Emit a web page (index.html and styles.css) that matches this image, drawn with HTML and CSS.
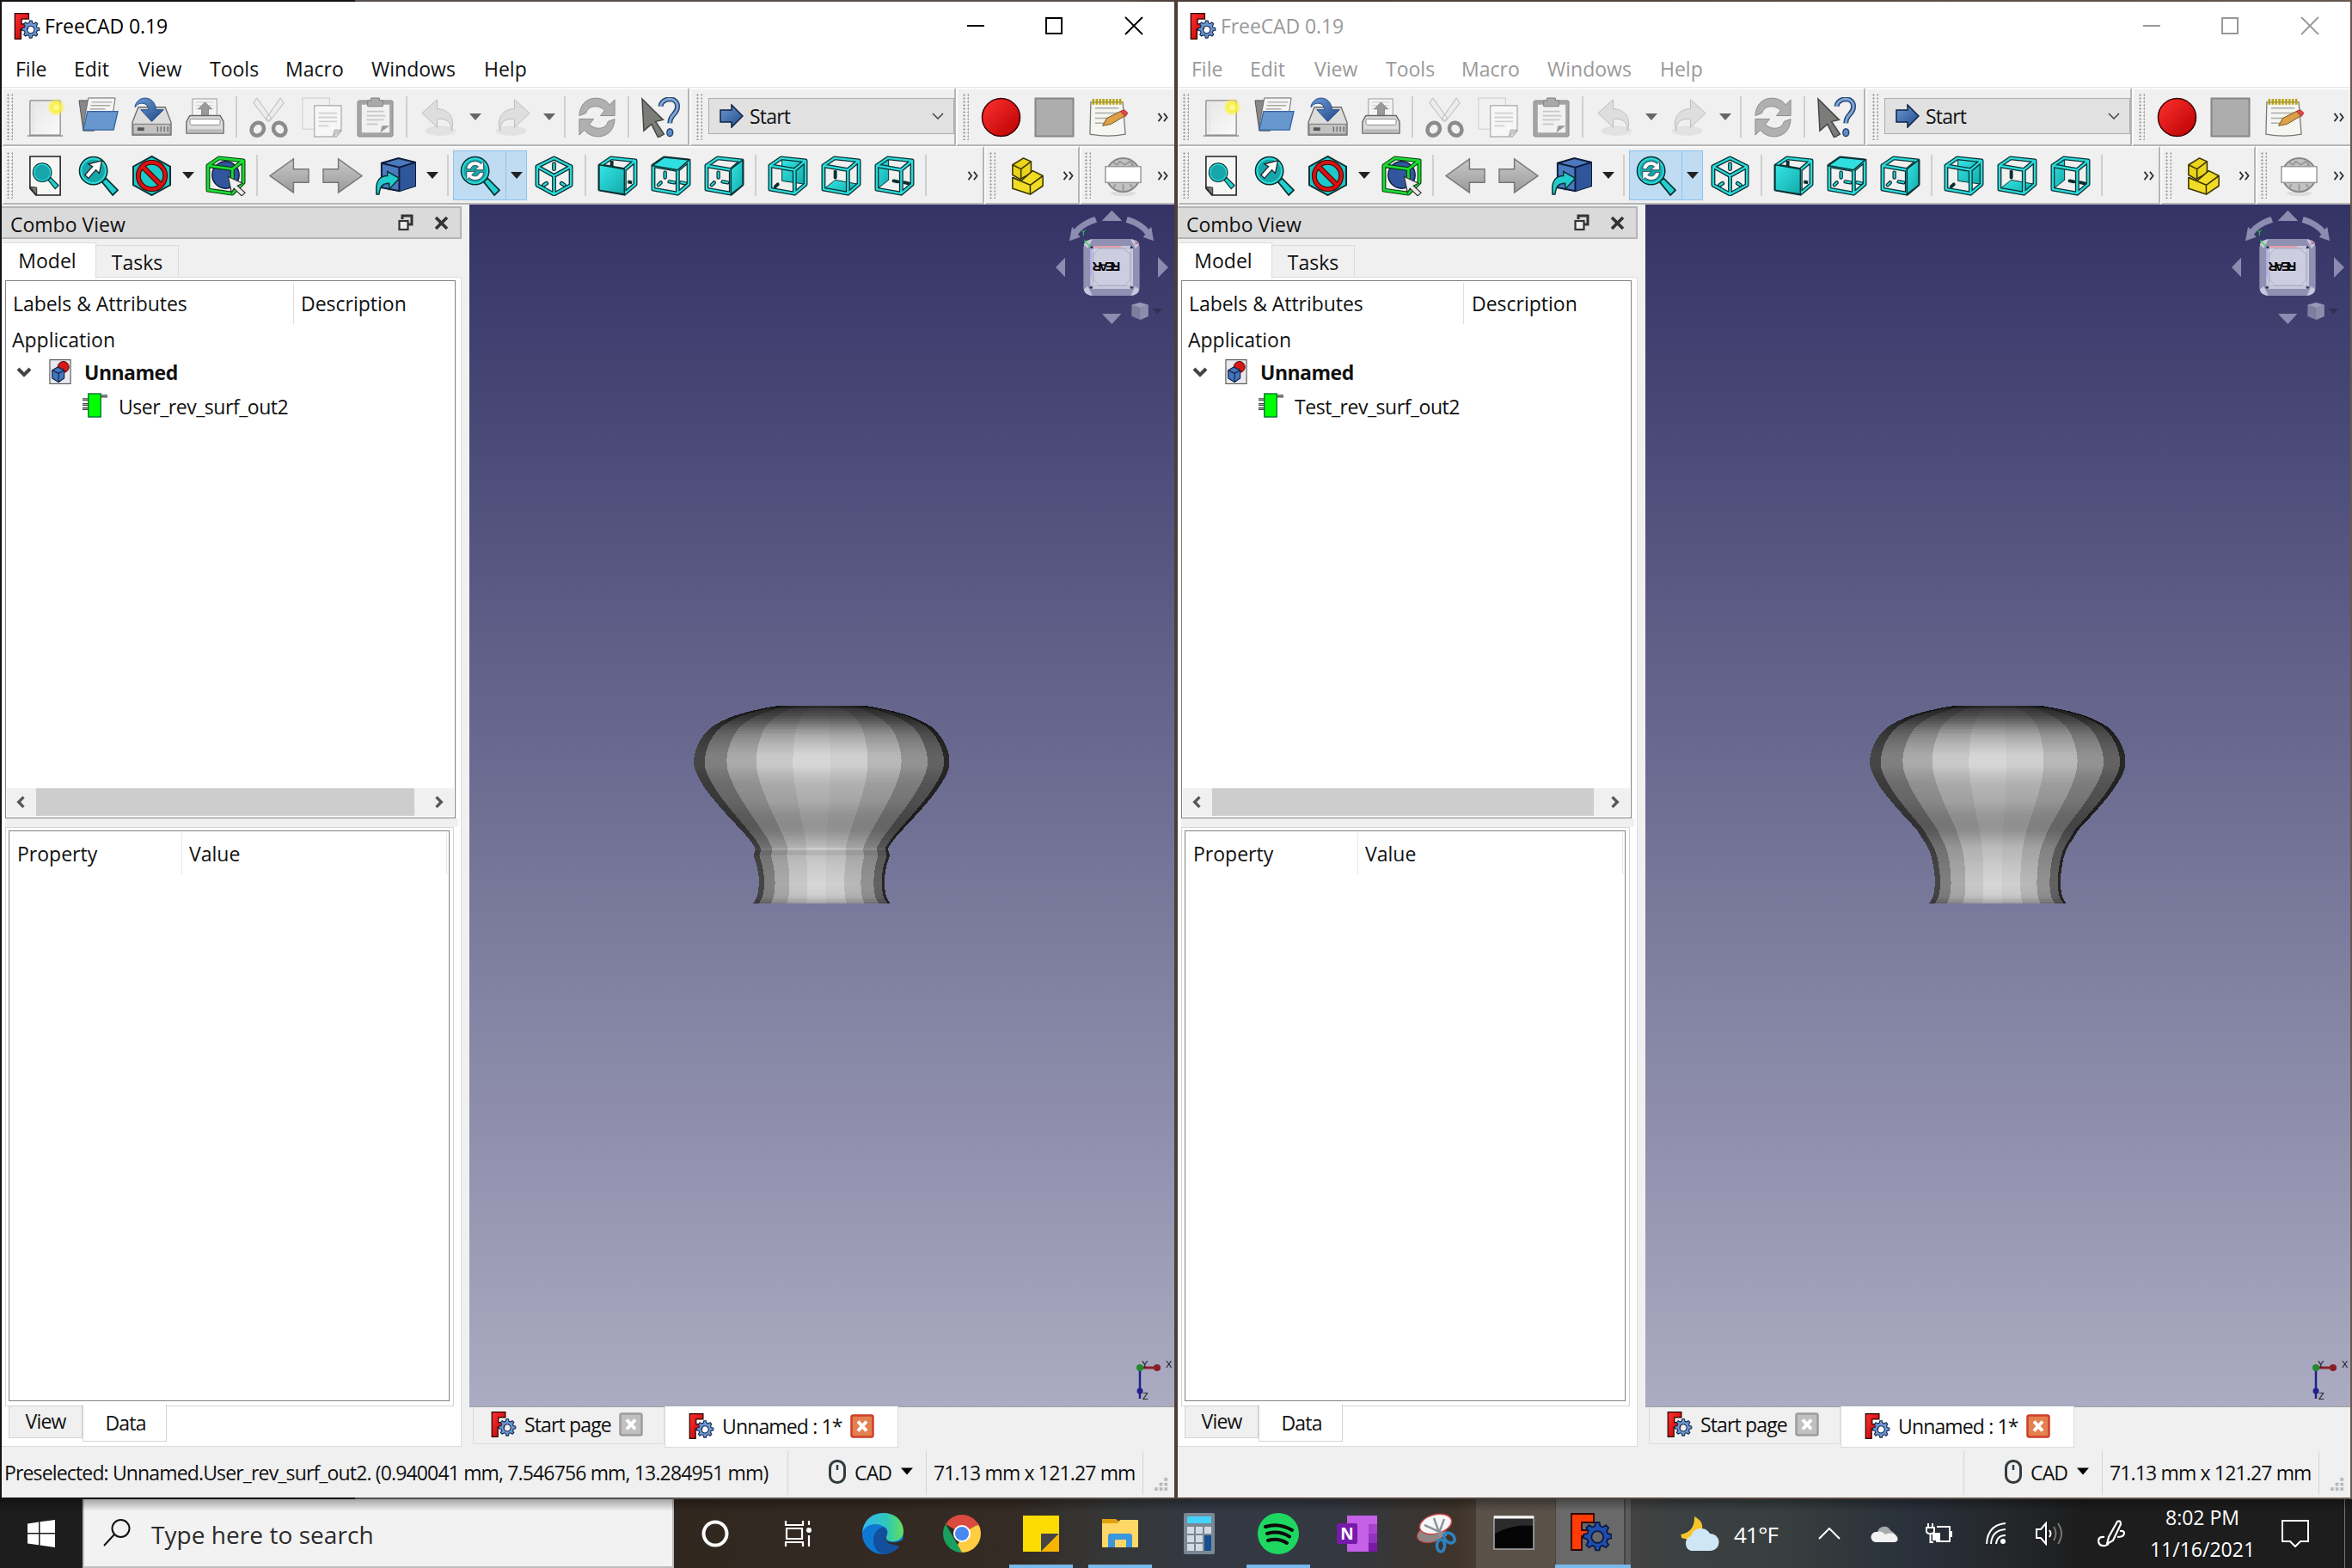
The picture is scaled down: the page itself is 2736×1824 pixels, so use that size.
FILE: index.html
```html
<!DOCTYPE html>
<html lang="en">
<head>
<meta charset="utf-8">
<title>FreeCAD 0.19</title>
<link rel="stylesheet" href="styles.css">
</head>
<body>
<svg class="defs" width="0" height="0">
<defs>
<linearGradient id="gTeal" x1="0" y1="0" x2="1" y2="1"><stop offset="0" stop-color="#35e6e6"/><stop offset="1" stop-color="#12a9a9"/></linearGradient>
<linearGradient id="gGrey" x1="0" y1="0" x2="0" y2="1"><stop offset="0" stop-color="#c9c9c9"/><stop offset="1" stop-color="#999"/></linearGradient>
<linearGradient id="gPaper" x1="0" y1="0" x2="1" y2="1"><stop offset="0" stop-color="#e6e6e6"/><stop offset="1" stop-color="#fafafa"/></linearGradient>
<linearGradient id="gBlue" x1="0" y1="0" x2="1" y2="1"><stop offset="0" stop-color="#6d9ad6"/><stop offset="1" stop-color="#204a87"/></linearGradient>
<linearGradient id="gRed" x1="0" y1="0" x2="1" y2="1"><stop offset="0" stop-color="#ff3030"/><stop offset="1" stop-color="#b80000"/></linearGradient>
<radialGradient id="gGlow"><stop offset="0" stop-color="#ffffc8"/><stop offset=".45" stop-color="#fcf03a"/><stop offset="1" stop-color="#fcf03a" stop-opacity="0"/></radialGradient>
<linearGradient id="gEdge" x1="0" y1="0" x2="1" y2="0"><stop offset="0" stop-color="#35b7f0"/><stop offset=".6" stop-color="#2fc8b8"/><stop offset="1" stop-color="#66e05a"/></linearGradient>
<path id="cog" fill-rule="evenodd" d="M21 0h6l1.500 6 4 1.700 5.300-3.200 4.200 4.200-3.200 5.300 1.700 4 6 1.500v6l-6 1.500-1.700 4 3.200 5.300-4.200 4.200-5.300-3.200-4 1.700-1.500 6h-6l-1.500-6-4-1.700-5.300 3.200-4.200-4.200 3.200-5.300-1.700-4-6-1.500v-6l6-1.500 1.700-4L6.100 8.700l4.200-4.200 5.300 3.200 4-1.700zM24 14a9.500 9.500 0 1 0 .01 0z"/>
<symbol id="fc" viewBox="0 0 48 48"><path d="M2 1H27V11H14V20H25V29H13V47H2z" fill="url(#gRed)" stroke="#2a0000" stroke-width="2"/><use href="#cog" transform="translate(14 14) scale(.69)" fill="#6c97d2" stroke="#14294d" stroke-width="2.500"/></symbol>
<symbol id="fcbig" viewBox="0 0 48 48"><path d="M1 1H27V11H13V20H23V27H13V43H1z" fill="#ff3c08" stroke="#320800" stroke-width="1.800"/><use href="#cog" transform="translate(14 11) scale(.72)" fill="#1f4fae" stroke="#0a1a44" stroke-width="2.500"/></symbol>
<symbol id="new" viewBox="0 0 48 48"><path d="M3 46H45" stroke="#777" stroke-width="2" opacity=".6"/><rect x="6" y="4" width="36" height="41" rx="1" fill="url(#gPaper)" stroke="#888" stroke-width="1.300"/><path d="M10 8v33" stroke="#ddd"/><circle cx="37" cy="12" r="11" fill="url(#gGlow)"/></symbol>
<symbol id="open" viewBox="0 0 48 48"><path d="M1 4h14l4 36H6z" fill="#888" stroke="#555"/><path d="M12 1h32l-5 33H6z" fill="#f4f4f4" stroke="#666"/><path d="M16 6h24M15 10h23M14 14h18" stroke="#aaa" stroke-width="1.500"/><path d="M11 17h36l-5 22H6z" fill="#6797cd" stroke="#3465a4" stroke-width="1.400"/></symbol>
<symbol id="save" viewBox="0 0 48 48"><path d="M8 12h32l7 18v15H1V30z" fill="#dcdcda" stroke="#666" stroke-width="1.300"/><path d="M2 32h44v12H2z" fill="#c2c2c0" stroke="#777"/><path d="M7 38h8" stroke="#555" stroke-width="4"/><path d="M31 35v6M35 35v6M39 35v6M43 35v6" stroke="#666" stroke-width="1.300"/><path d="M4 12C6-3 28-3 29 15h9L24 29 11 15h9C20 7 10 4 4 12z" fill="url(#gBlue)" stroke="#204a87"/></symbol>
<symbol id="print" viewBox="0 0 48 48"><path d="M9 2h29v24H9z" fill="#f4f4f4" stroke="#999"/><path d="M13 6h21M13 10h21M13 14h21" stroke="#ccc"/><path d="M24 6l8 8h-4v8h-8v-8h-4z" fill="#999" stroke="#888"/><path d="M6 22h36l4 7v14H2V29z" fill="#dcdcdc" stroke="#666" stroke-width="1.400"/><rect x="6" y="26" width="36" height="7" rx="2" fill="#fff" stroke="#888"/><path d="M4 40h40" stroke="#bbb" stroke-width="4"/></symbol>
<symbol id="cut" viewBox="0 0 48 48"><path d="M10 1L6 7l17 22 4-4zM38 1l4 6-17 22-4-4z" fill="#ececec" stroke="#b4b4b4"/><ellipse cx="11" cy="38" rx="7" ry="8" transform="rotate(40 11 38)" fill="none" stroke="#8c8c8c" stroke-width="4.600"/><ellipse cx="37" cy="38" rx="7" ry="8" transform="rotate(-40 37 38)" fill="none" stroke="#8c8c8c" stroke-width="4.600"/></symbol>
<symbol id="copy" viewBox="0 0 48 48"><path d="M1 1h32v37H1z" fill="#f1f1f1" stroke="#ccc"/><path d="M15 10h32v30l-6 7H15z" fill="#f7f7f7" stroke="#b5b5b5" stroke-width="1.500"/><path d="M20 19h22M20 24h22M20 29h22M20 34h12" stroke="#d0d0d0" stroke-width="1.800"/><path d="M47 39h-8l-2 8z" fill="#ccc" stroke="#aaa"/></symbol>
<symbol id="paste" viewBox="0 0 48 48"><rect x="3" y="4" width="42" height="43" rx="2" fill="#a4a4a4" stroke="#8a8a8a"/><path d="M8 9h33v33H8z" fill="#f1f1f1"/><path d="M14 17h20M14 22h22M14 27h20M14 32h13" stroke="#c8c8c8" stroke-width="1.800"/><path d="M15 4h4V1h10v3h4v7H15z" fill="#aaa" stroke="#808080"/><path d="M41 34h-9l-2 8z" fill="#999"/></symbol>
<symbol id="undo" viewBox="0 0 48 48"><ellipse cx="26" cy="40" rx="18" ry="6" fill="#e2e2e2"/><path d="M22 3v11c13 0 22 10 17 26 0-11-6-15-17-14v10L4 19z" fill="#dedede" stroke="#bbb"/></symbol>
<symbol id="redo" viewBox="0 0 48 48"><use href="#undo" transform="translate(48 0) scale(-1 1)"/></symbol>
<symbol id="refresh" viewBox="0 0 48 48"><path id="rfa" d="M3 22C4-3 31-3 39 9l6-6v19H28l5-6C26 8 13 10 11 19z" fill="#b0b0b0" stroke="#8a8a8a"/><use href="#rfa" transform="rotate(180 24 24)"/></symbol>
<symbol id="what" viewBox="0 0 48 48"><path d="M2 2l25 25-9 2 10 15-7 4-8-16-9 8z" fill="#7a7c78" stroke="#444" stroke-width="1.500"/><path d="M24 11C25 0 44-1 44 11c0 10-9 9-9 20" fill="none" stroke="#27466f" stroke-width="6"/><path d="M24 11C25 0 44-1 44 11c0 10-9 9-9 20" fill="none" stroke="#7fa6d8" stroke-width="3"/><ellipse cx="35" cy="42" rx="3.500" ry="4.500" fill="#5f8cc8" stroke="#27466f" stroke-width="1.500"/></symbol>
<symbol id="arrowB" viewBox="0 0 28 28"><path d="M1 7h13V1l13 13-13 13v-6H1z" fill="url(#gBlue)" stroke="#0f2142" stroke-width="1.500"/></symbol>
<symbol id="rec" viewBox="0 0 48 48"><circle cx="24" cy="24" r="22.500" fill="url(#gRed)" stroke="#3c0000" stroke-width="1.500"/></symbol>
<symbol id="stop" viewBox="0 0 48 48"><rect x="1.500" y="1.500" width="45" height="45" fill="#adadad" stroke="#858585" stroke-width="2"/></symbol>
<symbol id="macro" viewBox="0 0 48 48"><path d="M4 6h38l3 38q-21 4-42 0z" fill="#f5f5f2" stroke="#777" stroke-width="1.300"/><path d="M9 13h28M9 19h28M9 25h22M9 31h16" stroke="#aaa" stroke-width="1.500"/><path d="M7 2v7M11 2v7M15 2v7M19 2v7M23 2v7M27 2v7M31 2v7M35 2v7M39 2v7" stroke="#b7a100" stroke-width="2.400"/><path d="M18 34l5-9 18-9 4 6-17 10z" fill="#dca048" stroke="#7a5210"/><path d="M39 17l5-2 4 4-3 4z" fill="#e04848" stroke="#a33"/></symbol>
<g id="mag"><path d="M28 31l5-4 14 14-6 6z" fill="#22d0d0" stroke="#0b2f30" stroke-width="1.800"/><circle cx="18" cy="18" r="16.500" fill="#2bdada" stroke="#0b2f30" stroke-width="1.600"/><circle cx="18" cy="18" r="13.500" fill="#16a5a8"/></g>
<symbol id="fitall" viewBox="0 0 48 48"><path d="M6 1h36v46H13l-7-8z" fill="#f6f7f4" stroke="#222" stroke-width="1.600"/><path d="M6 37l8 1v9z" fill="#777" stroke="#222"/><use href="#mag" transform="translate(8.500 8) scale(.67)"/></symbol>
<symbol id="fitsel" viewBox="0 0 48 48"><use href="#mag"/><path d="M28 6l-3 15-4-4-9 10-4-4 9-10-5-3z" fill="#fff" stroke="#222" stroke-width="1.300"/></symbol>
<symbol id="dstyle" viewBox="0 0 48 48"><path d="M24 1l22 12v22L24 47 2 35V13z" fill="#1cc9c9" stroke="#0b2f30" stroke-width="2"/><circle cx="24" cy="24" r="16" fill="none" stroke="#460000" stroke-width="6"/><path d="M13 13l22 22" stroke="#460000" stroke-width="6.500"/><circle cx="24" cy="24" r="16" fill="none" stroke="#d81212" stroke-width="3.800"/><path d="M13 13l22 22" stroke="#d81212" stroke-width="4.300"/></symbol>
<symbol id="bbox" viewBox="0 0 48 48"><ellipse cx="24" cy="23" rx="16" ry="16" fill="#31569e" stroke="#0e1f43" stroke-width="1.500"/><g fill="none" stroke-linejoin="round"><path d="M3 12L32 16V45L3 41zM3 12L16 3 45 6 32 16M45 6V32L32 45" stroke="#053a0a" stroke-width="5"/><path d="M3 12L32 16V45L3 41zM3 12L16 3 45 6 32 16M45 6V32L32 45" stroke="#1bdc35" stroke-width="2.800"/></g><path d="M27 25l17 8-6 3 9 8-4 4-9-9-3 5z" fill="#eee" stroke="#333" stroke-width="1.200"/></symbol>
<symbol id="back" viewBox="0 0 48 48"><path d="M1 24L29 4v12h18v16H29v12z" fill="url(#gGrey)" stroke="#777" stroke-width="1.500"/></symbol>
<symbol id="fwd" viewBox="0 0 48 48"><path d="M47 24L19 4v12H1v16h18v12z" fill="url(#gGrey)" stroke="#777" stroke-width="1.500"/></symbol>
<symbol id="link" viewBox="0 0 48 48"><path d="M7 9l20-6 20 5v28L28 42 7 38z" fill="#4b79bd" stroke="#0d1c3a" stroke-width="2"/><path d="M28 14l19-6v28l-19 6z" fill="#2f569b"/><path d="M7 9l21 5 19-6M28 14v28" fill="none" stroke="#0d1c3a" stroke-width="2"/><path d="M1 46c-2-16 4-22 13-22v-5l14 8-12 13v-7C7 33 5 38 4 46z" fill="#22cccc" stroke="#0b2f30" stroke-width="1.500"/></symbol>
<symbol id="zoomv" viewBox="0 0 48 48"><use href="#mag"/><path id="za" d="M8 16c0-9 12-12 17-6l3-3v10H18l4-4c-4-3-9-1-9 3z" fill="#fff" stroke="#334" stroke-width=".8"/><use href="#za" transform="rotate(180 18 18)"/></symbol>
<symbol id="iso" viewBox="0 0 48 48"><g fill="none" stroke-linejoin="round" stroke-linecap="round"><path d="M24 3l20 10v22L24 46 4 35V13zM4 13l20 11 20-11M24 24v22M24 10v6M12 35l3-2M33 33l3 2" stroke="#0b2f30" stroke-width="5"/><path d="M24 3l20 10v22L24 46 4 35V13zM4 13l20 11 20-11M24 24v22M24 10v6M12 35l3-2M33 33l3 2" stroke="#2bdada" stroke-width="2.400"/></g></symbol>
<g id="cubeV" fill="none" stroke-linejoin="round" stroke-linecap="round"><path d="M3 12L32 17V45L3 40zM3 12L16 3 45 6 32 17M45 6V34L32 45" stroke="#0b2f30" stroke-width="5"/><path d="M3 12L32 17V45L3 40zM3 12L16 3 45 6 32 17M45 6V34L32 45" stroke="#2bdada" stroke-width="2.400"/></g>
<g id="cubeH" fill="none" stroke-linecap="round"><path d="M17 20v6M9 35l3-3M22 31l6 1M36 32l5 1" stroke="#0b2f30" stroke-width="4.500"/><path d="M17 20v6M9 35l3-3M22 31l6 1M36 32l5 1" stroke="#2bdada" stroke-width="2"/></g>
<symbol id="vfront" viewBox="0 0 48 48"><path d="M17 6v7M36 31l5 1" stroke="#0b2f30" stroke-width="4"/><use href="#cubeV"/><path d="M2 11L32 16V46L2 41z" fill="url(#gTeal)" stroke="#0b2f30" stroke-width="1.500"/></symbol>
<symbol id="vtop" viewBox="0 0 48 48"><use href="#cubeH"/><use href="#cubeV"/><path d="M2 12L16 2 46 5 32 17z" fill="#30dfdf" stroke="#0b2f30" stroke-width="1.500"/></symbol>
<symbol id="vright" viewBox="0 0 48 48"><use href="#cubeH"/><use href="#cubeV"/><path d="M32 16L46 5V35L32 46z" fill="url(#gTeal)" stroke="#0b2f30" stroke-width="1.500"/></symbol>
<symbol id="vrear" viewBox="0 0 48 48"><path d="M17 4L45 7V34L17 30z" fill="url(#gTeal)" stroke="#0b2f30"/><path d="M9 37l3-3" stroke="#0b2f30" stroke-width="4" stroke-linecap="round"/><use href="#cubeV"/></symbol>
<symbol id="vbottom" viewBox="0 0 48 48"><path d="M3 40L17 29 45 34 32 45z" fill="url(#gTeal)" stroke="#0b2f30"/><path d="M17 19v7" stroke="#0b2f30" stroke-width="4" stroke-linecap="round"/><use href="#cubeV"/></symbol>
<symbol id="vleft" viewBox="0 0 48 48"><path d="M3 12L17 4V29L3 40z" fill="url(#gTeal)" stroke="#0b2f30"/><path d="M23 30l5 1M36 32l5 1" stroke="#0b2f30" stroke-width="4" stroke-linecap="round"/><use href="#cubeV"/></symbol>
<symbol id="part" viewBox="0 0 48 48"><g stroke="#3d3500" stroke-width="1.600" stroke-linejoin="round"><path d="M6 11L19 3l9 4v14l-13 7-9-5z" fill="#ead51d"/><path d="M6 11l10 5 12-9M16 16v12" fill="none"/><path d="M6 26l10 4 14-12 12 6v12L27 46 6 39z" fill="#f0dc25"/><path d="M6 26l21 9 15-11M27 35v11" fill="none"/></g></symbol>
<symbol id="globe" viewBox="0 0 48 48"><ellipse cx="24" cy="45" rx="15" ry="3" fill="#ddd"/><circle cx="24" cy="23" r="20" fill="#c2c2c2" stroke="#848484" stroke-width="2"/><path d="M12 8l5 3 3-4 6 4 6-4 4 4-5 3M15 34l-3 5M24 34v9M32 34l4 5" stroke="#999" fill="none" stroke-width="2"/><rect x="3" y="13" width="42" height="19" fill="#fff" stroke="#999" stroke-width="1.500"/></symbol>
<symbol id="doc" viewBox="0 0 28 32"><rect x="1" y="1" width="26" height="30" fill="#e9e9ee" stroke="#555" stroke-width="1.200"/><circle cx="18" cy="10" r="7" fill="#d41818" stroke="#400"/><path d="M4 14l7-4 8 4v10l-7 5-8-5z" fill="#4475bd" stroke="#0e1f43" stroke-width="1.200"/><path d="M4 14l8 4 7-4M12 18v11" fill="none" stroke="#0e1f43" stroke-width="1.200"/></symbol>
<symbol id="feat" viewBox="0 0 32 30"><path d="M1 8h8M1 14h8M1 19h8M22 4h9" stroke="#444" stroke-width="3.200"/><path d="M1 8h8M1 14h8M1 19h8M22 4h9" stroke="#ab9" stroke-width="1"/><rect x="8" y="1" width="15" height="28" fill="#0f0" stroke="#063" stroke-width="1.300"/></symbol>
<symbol id="mouse" viewBox="0 0 20 28"><rect x="1.500" y="1.500" width="17" height="25" rx="8" fill="none" stroke="#333b3f" stroke-width="3"/><path d="M10 6v6" stroke="#333b3f" stroke-width="2.500"/></symbol>
<symbol id="closeG" viewBox="0 0 28 28"><rect x="1.500" y="1.500" width="25" height="25" rx="2" fill="#c0c0c0" stroke="#9c9c9c" stroke-width="2.500"/><path d="M9 8.500l10 11M19 8.500l-10 11" stroke="#fff" stroke-width="4"/></symbol>
<symbol id="closeR" viewBox="0 0 28 28"><rect x="1.500" y="1.500" width="25" height="25" rx="2" fill="#e2814f" stroke="#cf3f2b" stroke-width="2.500"/><path d="M9 8.500l10 11M19 8.500l-10 11" stroke="#fff" stroke-width="4"/></symbol>
<symbol id="more" viewBox="0 0 14 12"><path d="M1 1l4 5-4 5M8 1l4 5-4 5" fill="none" stroke="#333" stroke-width="2"/></symbol>
<symbol id="tri" viewBox="0 0 14 8"><path d="M0 0h14L7 8z"/></symbol>
</defs>
</svg>

<main class="desktop" id="desktop"></main>

<template id="windowTpl">
<section class="window">
  <header class="titlebar"><svg class="appicon"><use href="#fc"/></svg><span class="title">FreeCAD 0.19</span>
    <svg class="winbtns" viewBox="0 0 210 30" fill="none" stroke="currentColor" stroke-width="2"><path d="M5 15H25"/><rect x="97" y="6" width="18" height="18"/><path d="M189 5l20 20M209 5l-20 20" stroke-width="1.800"/></svg></header>
  <nav class="menu"><span>File</span><span>Edit</span><span>View</span><span>Tools</span><span>Macro</span><span>Windows</span><span>Help</span></nav>
  <div class="bars">
    <div class="bar file"><i class="grip"></i>
      <b class="cell"><svg><use href="#new"/></svg></b><b class="cell"><svg><use href="#open"/></svg></b><b class="cell"><svg><use href="#save"/></svg></b><b class="cell"><svg><use href="#print"/></svg></b><i class="sep"></i>
      <b class="cell"><svg><use href="#cut"/></svg></b><b class="cell"><svg><use href="#copy"/></svg></b><b class="cell"><svg><use href="#paste"/></svg></b><i class="sep"></i>
      <b class="cell"><svg><use href="#undo"/></svg></b><b class="drop faded"><svg><use href="#tri"/></svg></b><b class="cell"><svg><use href="#redo"/></svg></b><b class="drop faded"><svg><use href="#tri"/></svg></b><i class="sep"></i>
      <b class="cell"><svg><use href="#refresh"/></svg></b><i class="sep"></i><b class="cell"><svg><use href="#what"/></svg></b></div>
    <div class="bar bench"><i class="grip"></i><div class="combo"><svg class="ca"><use href="#arrowB"/></svg><span>Start</span><svg class="cv" viewBox="0 0 14 8"><path d="M1 1l6 6 6-6" fill="none" stroke="#444" stroke-width="1.500"/></svg></div></div>
    <div class="bar mac"><i class="grip"></i><b class="cell"><svg><use href="#rec"/></svg></b><b class="cell"><svg><use href="#stop"/></svg></b><b class="cell"><svg><use href="#macro"/></svg></b><svg class="more"><use href="#more"/></svg></div>
  </div>
  <div class="bars">
    <div class="bar view"><i class="grip"></i>
      <b class="cell"><svg><use href="#fitall"/></svg></b><b class="cell"><svg><use href="#fitsel"/></svg></b><b class="cell"><svg><use href="#dstyle"/></svg></b><b class="drop"><svg><use href="#tri"/></svg></b><b class="cell"><svg><use href="#bbox"/></svg></b><i class="sep"></i>
      <b class="cell"><svg><use href="#back"/></svg></b><b class="cell"><svg><use href="#fwd"/></svg></b><b class="cell"><svg><use href="#link"/></svg></b><b class="drop"><svg><use href="#tri"/></svg></b><i class="sep"></i>
      <b class="cell hot"><svg><use href="#zoomv"/></svg></b><b class="drop hot"><svg><use href="#tri"/></svg></b><b class="cell"><svg><use href="#iso"/></svg></b><i class="sep"></i>
      <b class="cell"><svg><use href="#vfront"/></svg></b><b class="cell"><svg><use href="#vtop"/></svg></b><b class="cell"><svg><use href="#vright"/></svg></b><i class="sep"></i>
      <b class="cell"><svg><use href="#vrear"/></svg></b><b class="cell"><svg><use href="#vbottom"/></svg></b><b class="cell"><svg><use href="#vleft"/></svg></b><i class="sep"></i><svg class="more"><use href="#more"/></svg></div>
    <div class="bar struct"><i class="grip"></i><b class="cell"><svg><use href="#part"/></svg></b><svg class="more"><use href="#more"/></svg></div>
    <div class="bar web"><i class="grip"></i><b class="cell"><svg><use href="#globe"/></svg></b><svg class="more"><use href="#more"/></svg></div>
  </div>
  <div class="work">
    <aside class="dock">
      <div class="docktitle"><span>Combo View</span><svg viewBox="0 0 60 20"><path d="M6 6V2h11v10h-4" fill="none" stroke="#333" stroke-width="3"/><rect x="2.500" y="8" width="10" height="10" fill="#eee" stroke="#333" stroke-width="2.200"/><path d="M45 4l13 13M58 4L45 17" stroke="#333" stroke-width="3.600"/></svg></div>
      <div class="tabs"><span class="on">Model</span><span class="off">Tasks</span></div>
      <div class="pane">
        <div class="tree">
          <div class="thead"><span class="labels">Labels &amp; Attributes</span><span class="desc">Description</span></div>
          <div class="row app">Application</div>
          <div class="row docrow"><svg class="chev" viewBox="0 0 18 12"><path d="M2 2l7 7 7-7" fill="none" stroke="#444" stroke-width="4"/></svg><svg class="docico"><use href="#doc"/></svg><strong>Unnamed</strong></div>
          <div class="row item"><svg><use href="#feat"/></svg><span data-slot="item"></span></div>
          <div class="hscroll"><svg viewBox="0 0 10 12"><path d="M8 1L3 6l5 5" fill="none" stroke="#555" stroke-width="2.800"/></svg><i></i><svg viewBox="0 0 10 12"><path d="M2 1l5 5-5 5" fill="none" stroke="#555" stroke-width="2.800"/></svg></div>
        </div>
        <div class="gap"></div>
        <div class="prop"><div class="propbox"><span class="p1">Property</span><span class="p2">Value</span></div></div>
        <div class="btabs"><span class="off">View</span><span class="on">Data</span></div>
      </div>
    </aside>
    <div class="mdi">
      <div class="viewport">
        <svg class="knob" viewBox="0 0 350 270" shape-rendering="crispEdges"></svg>
        <svg class="nav" viewBox="0 24 498 456">
          <g fill="#8c8cb0"><path d="M280 44l36 37h-71zM84 243l33-34v68zM477 243l-36-36v72zM280 441l33-36h-67z"/><path d="M221 66l7 20q-48 15-66 42l8 9-38 14 9-49 8 8q28-31 72-44zM335 66l-6 20q49 15 68 42l-8 9 37 14-8-49-9 8q-28-31-74-44z"/></g>
          <path d="M205 144h148l24 26v148l-24 24H205l-24-24V170z" fill="#9090b2"/>
          <path d="M182 165q4-20 30-19l-16 30zM376 165q-4-20-30-19l16 30zM182 320q4 20 30 21l-16-32zM376 320q-4 20-30 21l16-32z" fill="#c6c6dc"/>
          <rect x="205" y="168" width="149" height="150" fill="#c9c9de"/>
          <path d="M235 177h88l22 20v92l-22 18h-88l-20-18v-92z" fill="#cdcde0" stroke="#8f8fa5" stroke-width="2"/>
          <path d="M215 177h22l-22 20zM345 177h-22l22 20zM215 307h22l-22-20zM345 307h-22l22-20z" fill="#d3d3e6" stroke="#9999ae" stroke-width="1.500"/>
          <path d="M210 171h102" stroke="#ee8e9c" stroke-width="5"/><path d="M207 176v100" stroke="#a9a9f2" stroke-width="5"/>
          <path d="M208 173l-24-24" stroke="#2fdc4a" stroke-width="4"/><path d="M175 112l6 9 7-9M181 121v11" stroke="#2fdc4a" stroke-width="3" fill="none"/><path d="M360 152l12 12M372 152l-12 12" stroke="#b44a68" stroke-width="3"/>
          <g fill="#333360"><circle cx="210" cy="173" r="5"/><circle cx="349" cy="173" r="5"/><circle cx="208" cy="313" r="5"/><circle cx="349" cy="313" r="5"/></g>
          <text class="face" x="-266" y="-225" transform="rotate(180)">REAR</text>
          <path d="M349 374l30-8 28 8v40l-28 12-30-12z" fill="#7d7d9e"/><path d="M349 374l30 9 28-9-28-8z" fill="#9a9ab8"/><path d="M379 383v43l28-12v-40z" fill="#8c8cac"/><path d="M421 387h36l-18 18z" fill="#303055"/>
        </svg>
        <svg class="axes" viewBox="0 0 50 50"><path d="M11 11h24" stroke="#8a2028" stroke-width="3"/><circle cx="31" cy="11" r="4" fill="#8a2028"/><path d="M11 11v36" stroke="#20208c" stroke-width="2.500"/><circle cx="11" cy="38" r="3.500" fill="#20208c"/><circle cx="11" cy="11" r="4" fill="#1f8a30"/><g class="axt"><text x="13" y="11">Y</text><text x="41" y="11">X</text><text x="14" y="48">Z</text></g></svg>
      </div>
      <div class="mtabs"><div class="mtab off"><svg class="appicon"><use href="#fc"/></svg><span>Start page</span><svg class="x"><use href="#closeG"/></svg></div><div class="mtab on"><svg class="appicon"><use href="#fc"/></svg><span>Unnamed : 1*</span><svg class="x"><use href="#closeR"/></svg></div></div>
    </div>
  </div>
  <footer class="status"><span class="msg" data-slot="status"></span><span class="cad"><svg class="mo"><use href="#mouse"/></svg><em>CAD</em><svg class="dd"><use href="#tri"/></svg></span><span class="dims">71.13 mm x 121.27 mm</span><svg class="size" viewBox="0 0 18 18" fill="#b8b8b8"><path d="M12 0h4v4h-4zM6 6h4v4H6zM12 6h4v4h-4zM0 12h4v4H0zM6 12h4v4H6zM12 12h4v4h-4z"/></svg></footer>
</section>
</template>

<div class="taskbar">
  <div class="start"><svg viewBox="0 0 32 32" fill="#fff"><path d="M0 4.500l13-2V15H0zM14.500 2.300L32 0v15H14.500zM0 16.500h13v12.700L0 27.500zM14.500 16.500H32V32l-17.500-2.500z"/></svg></div>
  <div class="search"><svg viewBox="0 0 32 32" fill="none" stroke="#111" stroke-width="2"><circle cx="20.500" cy="11" r="10"/><path d="M13 18L1 31"/></svg><span>Type here to search</span></div>
  <div class="tb cort"><svg viewBox="0 0 48 48"><circle cx="24" cy="24" r="13.500" fill="none" stroke="#fff" stroke-width="4"/></svg></div>
  <div class="tb tview"><svg viewBox="0 0 48 48" fill="none" stroke="#fff" stroke-width="2.200"><path d="M8 9v5h20V9M8 39v-5h20v5M9 18h18v12H9zM35 9v5M35 26v13"/><circle cx="35" cy="20" r="3" fill="#fff" stroke="none"/></svg></div>
  <div class="tb"><svg viewBox="0 0 48 48"><circle cx="24" cy="24" r="24" fill="#0f78d4"/><path d="M0 23C2 6 14 0 25 0c14 0 23 10 23 21 0 8-6 12-12 12-7 0-9-3-8-5 4-8-4-15-12-15C8 13 2 17 0 23z" fill="url(#gEdge)"/><path d="M13 32c0-9 6-15 12-16 6 3 5 9 2 13 0 5 8 10 17 6-4 9-12 13-20 13-7-2-11-9-11-16z" fill="#124f9c"/><path d="M28 27c-3 5 6 11 20 4l1 5-5 3-6-2c-6 0-10-3-12-8z" fill="#33281f"/></svg></div>
  <div class="tb"><svg viewBox="0 0 48 48"><path d="M24 24L5 13a22 22 0 0 1 38 0z" fill="#db4a3f"/><path d="M24 24h0L43 13a22 22 0 0 1-19 33z" fill="#ffcd42"/><path d="M5 13l14 24 5 9A22 22 0 0 1 5 13z" fill="#18a05e"/><path d="M19 37l5-10 10-2-10 21z" fill="#ffcd42"/><path d="M5 13l19 1h19z" fill="#db4a3f"/><path d="M24 14h20" stroke="#db4a3f"/><circle cx="24" cy="24" r="10" fill="#fff"/><circle cx="24" cy="24" r="8" fill="#4a88f0"/></svg></div>
  <div class="tb run"><svg viewBox="0 0 48 48"><path d="M3 3h42v42H3z" fill="#fddc04"/><path d="M24 24h21L24 45z" fill="#444"/><path d="M45 24L24 45h21z" fill="#f7b500"/></svg></div>
  <div class="tb run"><svg viewBox="0 0 48 48"><path d="M3 7h16l4 3v8H3z" fill="#e0a010"/><path d="M3 12h18l3-4h21v32H3z" fill="#ffd766"/><path d="M10 40V27q0-3 3-3h22q3 0 3 3v13h-7v-9H18v9z" fill="#3a96dd"/></svg></div>
  <div class="tb"><svg viewBox="0 0 48 48"><rect x="6" width="36" height="48" rx="2" fill="#7a8894"/><rect x="10" y="4" width="28" height="8" fill="#43d3fa"/><path d="M10 16h8v8h-8zM20 16h8v8h-8zM30 16h8v8h-8zM10 26h8v8h-8zM20 26h8v8h-8zM10 36h8v8h-8zM20 36h8v8h-8z" fill="#d3dbe2"/><path d="M30 26h8v18h-8z" fill="#174f90"/></svg></div>
  <div class="tb run"><svg viewBox="0 0 48 48"><circle cx="24" cy="24" r="24" fill="#1ed760"/><path d="M9 16q16-5 31 4M11 24q14-4 26 3.500M12 32q12-3.500 22 3" fill="none" stroke="#0b0b0b" stroke-width="4" stroke-linecap="round"/></svg></div>
  <div class="tb"><svg viewBox="0 0 48 48"><path d="M12 3h35v42H12z" fill="#c561e6"/><path d="M37 13h10v11H37z" fill="#a742cd"/><path d="M37 24h10v11H37z" fill="#9332bf"/><path d="M37 35h10v10H37z" fill="#7a18a8"/><rect y="12" width="24" height="24" rx="2" fill="#7719aa"/><text class="one" x="12" y="31">N</text></svg></div>
  <div class="tb"><svg viewBox="0 0 48 48"><ellipse cx="18" cy="24" rx="17" ry="10" transform="rotate(-15 18 24)" fill="#8e8686" stroke="#b33"/><ellipse cx="23" cy="13" rx="19" ry="11" transform="rotate(-15 23 13)" fill="#f7f7f7" stroke="#c44" stroke-width="1.500"/><path d="M21 6l8 22M10 14l26 12M33 7L26 26" stroke="#8d9499" stroke-width="2.500"/><ellipse cx="39" cy="29" rx="5" ry="7" transform="rotate(-50 39 29)" fill="none" stroke="#2c83c0" stroke-width="3.500"/><ellipse cx="29" cy="38" rx="4.500" ry="7" fill="none" stroke="#2c83c0" stroke-width="3.500"/></svg></div>
  <div class="tb cmd"><svg viewBox="0 0 48 48"><rect x="1" y="4" width="46" height="38" fill="#050505" stroke="#aaa" stroke-width="1.500"/><path d="M2 24Q24 12 46 15V6H2z" fill="#2b2b2b"/><path d="M1 5h46" stroke="#fff" stroke-width="3"/></svg></div>
  <div class="tb fca run"><svg><use href="#fcbig"/></svg></div>
  <div class="tray">
    <svg class="weather" viewBox="0 0 46 40"><path d="M16 0q14 7 7 20-8 10-22 5 0-3-1-4Q17 18 16 0z" fill="#f7c52b"/><path d="M12 40a9 9 0 0 1 0-17 12 12 0 0 1 22-3 10 10 0 0 1 1 20z" fill="#cfe6f7"/></svg><span class="temp">41°F</span>
    <svg class="up" viewBox="0 0 26 14"><path d="M1 13L13 1l12 12" fill="none" stroke="#fff" stroke-width="2"/></svg>
    <svg class="cloud" viewBox="0 0 32 22"><path d="M8 10a8 8 0 0 1 15-3l5 4-12 6z" fill="#a7a9ab"/><path d="M6 21a6 6 0 0 1 1-12q6-2 10 3 10-4 14 3 2 5-3 6z" fill="#f2f2f2"/></svg>
    <svg class="bat" viewBox="0 0 32 24" fill="none" stroke="#fff" stroke-width="2"><path d="M3 0v5M8 0v5M1 5h9v4q0 3-4.500 3T1 9zM5.500 12v10H9M13 4h15v17H12M30 9v7"/><path d="M9 12h7v7H9z" fill="#fff"/></svg>
    <svg class="wifi" viewBox="0 0 24 26" fill="none" stroke="#fff" stroke-width="2"><path d="M1 25Q2 3 23 1M6 25Q7 9 23 8M12 25q1-10 11-10"/><circle cx="20" cy="22" r="3" fill="#fff" stroke="none"/></svg>
    <svg class="vol" viewBox="0 0 32 28" fill="none" stroke="#fff" stroke-width="2"><path d="M1 9h5l6-7v24l-6-7H1zM16 10q3 4 0 8"/><path d="M21 6q5 8 0 16M26 2q8 12 0 24" stroke="#777"/></svg>
    <svg class="pen" viewBox="0 0 32 32" fill="none" stroke="#fff" stroke-width="2.200"><path d="M8 20q-7-1-7 5 1 6 8 5l4-2M11 28l2-8L23 2q4-2 4 3L18 24zM26 13q5-1 5 3-1 4-8 4"/></svg>
    <div class="clock"><span>8:02 PM</span><span class="date">11/16/2021</span></div>
    <svg class="notif" viewBox="0 0 32 32" fill="none" stroke="#fff" stroke-width="2"><path d="M1 1h30v24h-9l-6 6-6-6H1z"/></svg>
    <i class="peek"></i>
  </div>
</div>
<script src="app.js"></script>
</body>
</html>
```
FILE: styles.css
```css
* { box-sizing: border-box; }
body { margin: 0; width: 2736px; height: 1824px; overflow: hidden; background: #2b2623; font: 23px/30px "Open Sans", "Noto Sans", sans-serif; color: #111; }
i, em { font-style: normal; }
b { font-weight: normal; }
svg { display: block; flex: none; }
.defs { position: absolute; }
.desktop { display: flex; gap: 4px; height: 1744px; padding: 2px; background: linear-gradient(90deg, #141414 0 413px, #57504c 413px 1300px, #4a3b36 1380px, #66584f 100%); }
.window { width: 1364px; height: 1740px; display: flex; flex-direction: column; background: #f0f0f0; overflow: hidden; }
.titlebar { height: 56px; background: #fff; display: flex; align-items: center; padding-left: 14px; color: #000; }
.appicon { width: 31px; height: 31px; }
.title { margin-left: 5px; flex: 1; letter-spacing: -.1px; }
.winbtns { width: 210px; height: 30px; margin-right: 36px; }
.menu { height: 44px; background: #fff; display: flex; border-bottom: 1px solid #e6e6e6; padding: 7px 0 0 16px; }
.menu span { width: 68px; }
.menu span:nth-child(2) { width: 75px; }
.menu span:nth-child(3) { width: 83px; }
.menu span:nth-child(4) { width: 88px; }
.menu span:nth-child(5) { width: 100px; }
.menu span:nth-child(6) { width: 131px; }
.inactive .title, .inactive .menu, .inactive .winbtns { color: #999; }
.bars { display: flex; height: 68px; }
.bar { display: flex; align-items: center; height: 68px; border-top: 2px solid #fbfbfb; border-bottom: 2px solid #b6b6b6; border-right: 2px solid #b6b6b6; border-left: 2px solid #fbfbfb; flex: none; }
.bar.file { width: 800px; }
.bar.bench { width: 310px; }
.bar.mac { width: 254px; border-right: 0; }
.bar.view { width: 1143px; }
.bar.struct { width: 111px; }
.bar.web { width: 110px; border-right: 0; }
.grip { flex: none; width: 7px; height: 54px; margin: 0 6px 0 4px; background-image: radial-gradient(circle at 1.500px 1.500px, #aaa 1.200px, transparent 1.300px); background-size: 5px 4px; }
.bench .grip, .mac .grip { margin-left: 6px; }
.cell { width: 62px; height: 58px; display: flex; align-items: center; justify-content: center; flex: none; }
.cell svg { width: 47px; height: 47px; }
.sep { width: 12px; height: 48px; flex: none; background: linear-gradient(90deg, transparent 5px, #cfcfcf 5px 7px, transparent 7px); }
.drop { width: 24px; height: 58px; display: flex; align-items: center; justify-content: center; flex: none; fill: #222; }
.drop.faded { fill: #666; }
.drop svg { width: 14px; height: 8px; }
.hot { background: #bfdcf3; border: 1px solid #91c3ea; }
.drop.hot { border-left: 0; }
.more { width: 14px; height: 11px; margin-left: auto; margin-right: 4px; }
.mac .more, .web .more { margin-right: 6px; }
.combo { flex: none; width: 286px; height: 42px; background: #e1e1e1; border: 1px solid #adadad; display: flex; align-items: center; padding: 0 11px 0 12px; margin: -2px 0 0 1px; }
.combo .ca { width: 28px; height: 28px; }
.combo span { flex: 1; margin-left: 7px; letter-spacing: -.8px; }
.combo .cv { width: 14px; height: 8px; }
.work { display: flex; height: 1448px; flex: none; }
.dock { width: 544px; padding-top: 2px; }
.docktitle { width: 535px; height: 38px; background: #dadada; border: 2px solid #b5b5b5; border-left: 0; display: flex; align-items: center; justify-content: space-between; padding: 4px 13px 0 10px; }
.docktitle svg { width: 60px; height: 20px; margin-top: -5px; }
.tabs { height: 44px; display: flex; align-items: flex-end; padding-top: 4px; }
.tabs span { text-align: center; position: relative; }
.tabs .on { width: 110px; height: 42px; background: #fff; line-height: 41px; padding-right: 3px; margin-bottom: -2px; border: 1px solid #dcdcdc; border-bottom: 0; border-left: 0; }
.tabs .off { width: 96px; height: 37px; line-height: 39px; border: 1px solid #dcdcdc; border-bottom: 0; border-left: 0; }
.pane { width: 535px; height: 1361px; background: #fff; border: 1px solid #dcdcdc; border-left: 0; padding: 3px 0 0 4px; }
.tree { width: 524px; height: 626px; border: 1px solid #828282; display: flex; flex-direction: column; background: #fff; }
.thead { height: 50px; display: flex; padding-top: 2px; line-height: 48px; }
.labels { width: 335px; padding-left: 8px; border-right: 1px solid #e0e0e0; letter-spacing: -.05px; }
.desc { padding-left: 8px; }
.window.wide .labels { width: 328px; }
.window.wide .desc { padding-left: 9px; }
.row { display: flex; align-items: center; }
.app { height: 36px; padding-left: 7px; }
.docrow { height: 39px; padding-left: 12px; }
.docrow strong { margin-left: 15px; letter-spacing: -.5px; }
.chev { width: 18px; height: 12px; }
.docico { width: 26px; height: 31px; margin-left: 20px; }
.item { height: 41px; padding-left: 88px; letter-spacing: -.46px; }
.item svg { width: 31px; height: 29px; margin-right: 12px; margin-top: -3px; }
.hscroll { margin: auto 1px 2px; height: 32px; background: #f0f0f0; display: flex; align-items: center; }
.hscroll svg { width: 12px; height: 14px; margin: 0 11px 0 10px; }
.hscroll i { width: 440px; height: 32px; margin: 0 13px 0 1px; background: #cdcdcd; }
.wide .hscroll i { width: 444px; margin-right: 9px; }
.gap { width: 527px; height: 10px; background: #f0f0f0; }
.prop { width: 522px; height: 674px; border: 1px solid #d4d4d4; padding: 3px; }
.propbox { width: 513px; height: 664px; border: 1px solid #828282; display: flex; padding-top: 2px; line-height: 48px; }
.propbox span { height: 48px; border-right: 1px solid #e4e4e4; }
.p1 { width: 201px; padding-left: 9px; }
.p2 { width: 308px; padding-left: 8px; }
.btabs { display: flex; padding-left: 4px; margin-top: -2px; position: relative; text-align: center; letter-spacing: -.8px; }
.btabs .off { width: 86px; height: 37px; margin-top: 2px; line-height: 35px; background: #f0f0f0; border: 1px solid #d4d4d4; border-top: 0; }
.btabs .on { width: 98px; height: 43px; line-height: 42px; padding-left: 2px; background: #fff; border: 1px solid #d4d4d4; border-top: 0; }
.mdi { width: 820px; }
.viewport { height: 1398px; background: linear-gradient(#333366, #ababc2); position: relative; }
.knob { position: absolute; left: 234px; top: 561px; width: 350px; height: 270px; }
.nav { position: absolute; right: 0; top: 0; width: 166px; height: 152px; }
.face { font: bold 45px "Liberation Sans", sans-serif; text-anchor: middle; letter-spacing: -10px; }
.axes { position: absolute; right: 1px; bottom: 6px; width: 50px; height: 50px; }
.axt { font: 11px "Liberation Sans", sans-serif; fill: #111; }
.mtabs { display: flex; border-top: 1px solid #a0a0a0; height: 50px; padding-left: 4px; letter-spacing: -.85px; }
.mtab { display: flex; align-items: center; padding-bottom: 2px; }
.mtab .appicon { width: 30px; height: 30px; margin-right: 9px; }
.mtab .x { width: 28px; height: 28px; margin-left: 9px; }
.mtab.off { width: 223px; height: 43px; border: 1px solid #dcdcdc; border-top: 0; padding-left: 20px; }
.mtab.on { width: 272px; height: 48px; margin-top: -1px; background: #fff; border: 1px solid #dcdcdc; border-top: 0; padding-left: 27px; }
.status { flex: 1; display: flex; align-items: center; letter-spacing: -.85px; padding-bottom: 2px; }
.status > span { height: 51px; line-height: 51px; border-right: 1px solid #d4d4d4; white-space: nowrap; }
.msg { width: 915px; padding-left: 3px; }
.cad { width: 161px; display: flex; align-items: center; padding-left: 47px; }
.cad em { margin: 0 11px 0 10px; }
.mo { width: 20px; height: 28px; margin-top: -2px; }
.dd { width: 14px; height: 9px; margin-top: -3px; }
.dims { width: 252px; padding-left: 8px; }
.size { width: 17px; height: 17px; margin: 28px 0 0 13px; }
.taskbar { height: 80px; display: flex; background: linear-gradient(90deg, #1d1d1d 0 96px, #30271f 784px, #352b25 1180px, #363737 1290px, #333944 1400px, #343840 1560px, #3e342b 1690px, #54493f 1760px, #3c4042 1950px, #38403f 2060px, #29303a 2230px, #25292d 2320px, #1d1d1d 2420px); color: #fff; position: relative; }
.taskbar::after { content: ""; position: absolute; inset: 0 0 auto; height: 14px; background: linear-gradient(rgba(0,0,0,.32), transparent); }
.start { width: 96px; padding: 24px 32px; }
.start svg { width: 32px; height: 32px; }
.search { width: 688px; background: #f2f2f2; border: 2px solid #bdbdbd; border-top: 0; display: flex; align-items: center; padding: 4px 0 0 22px; color: #2b2b2b; font-size: 28px; }
.search svg { width: 32px; height: 32px; margin-top: -4px; }
.search span { margin-left: 24px; letter-spacing: .05px; }
.tb { width: 92px; height: 80px; display: flex; align-items: center; justify-content: center; position: relative; }
.tb svg { width: 48px; height: 48px; }
.cort { width: 96px; }
.tview { width: 101px; padding-right: 2px; }
.run::after { content: ""; position: absolute; left: 9px; right: 9px; bottom: 0; height: 4px; background: #76b9ed; }
.cmd { background: #5a5149; padding-right: 5px; }
.fca { width: 88px; padding-right: 5px; background: linear-gradient(90deg, #444 0 1px, #696969 1px 80px, #444 80px 82px, #5c5c5c 82px); }
.fca::after { left: 0; right: 0; }
.tray { display: flex; align-items: center; flex: 1; }
.weather { width: 46px; height: 40px; margin-left: 58px; }
.temp { width: 98px; margin-left: 16px; font-size: 26px; letter-spacing: -.8px; padding-top: 2px; }
.up { width: 26px; height: 14px; }
.cloud { width: 32px; height: 22px; margin-left: 35px; }
.bat { width: 32px; height: 24px; margin-left: 32px; }
.wifi { width: 24px; height: 26px; margin-left: 38px; }
.vol { width: 32px; height: 28px; margin-left: 34px; }
.pen { width: 32px; height: 32px; margin-left: 40px; }
.clock { width: 130px; margin: -2px 0 0 25px; text-align: center; display: flex; flex-direction: column; gap: 7px; }
.notif { width: 32px; height: 32px; margin-left: 27px; }
.peek { width: 1px; height: 80px; background: #777; margin-left: 41px; }
.one { font: bold 19px "Open Sans", sans-serif; fill: #fff; text-anchor: middle; }
```
FILE: app.js
```js
// Facet boundaries as a fraction of the radius, and the grey level of each facet.
const EDGES = [-1, -.915, -.743, -.511, -.225, .068, .361, .624, .828, .956, 1];
const GREYS = [70, 127, 170, 200, 214, 207, 184, 146, 98, 40];
// Light falling on the surface, by height.
const LIGHT = [[66, .12], [75, .28], [100, .38], [120, .5], [135, .6], [150, .7], [170, .8], [190, .87], [215, .94], [240, 1], [275, 1], [300, .93], [340, .85], [400, .8], [425, .75], [450, .71], [480, .69], [505, .71], [520, .76], [540, .82], [560, .88], [600, .92], [625, .95], [660, .98], [690, 1], [725, .97], [740, .9], [755, .75]];
const HEAD = [[66, 153], [75, 205], [85, 250], [100, 305], [120, 350], [140, 385], [160, 405], [180, 420], [200, 431], [225, 441], [250, 446], [280, 445], [300, 438], [320, 428], [350, 410], [380, 388], [425, 350], [460, 318], [500, 281]];
const FOOT = [[660, 220], [690, 219], [710, 221], [730, 225], [745, 232], [755, 239]];
const PROFILES = {
  user: [...HEAD, [530, 254], [550, 240], [563, 232], [575, 231], [583, 239], [600, 234], [625, 226], ...FOOT],
  test: [...HEAD, [530, 263], [550, 249], [570, 239], [600, 229], [635, 223], ...FOOT],
};

function at(table, y) {
  const i = Math.max(1, table.findIndex(p => p[0] >= y));
  const [a, b] = [table[i - 1], table[i]];
  return a[1] + (b[1] - a[1]) * (y - a[0]) / (b[0] - a[0]);
}

function knob(name) {
  const profile = PROFILES[name];
  let out = '';
  for (let y = 66; y < 755; y += 9) {
    const y2 = Math.min(755, y + 9), r1 = at(profile, y), r2 = at(profile, y2);
    let light = at(LIGHT, (y + y2) / 2);
    if (name === 'user' && y > 555 && y < 582) light = y < 570 ? .95 : .84;
    for (let f = 0; f < GREYS.length; f++) {
      const g = Math.round(GREYS[f] * light);
      const pt = (r, e, py) => ((527.5 + r * e) / 3).toFixed(2) + ',' + (py / 3).toFixed(2);
      out += `<polygon fill="rgb(${g},${g},${g})" points="${pt(r1, EDGES[f], y)} ${pt(r1, EDGES[f + 1], y)} ${pt(r2, EDGES[f + 1], y2)} ${pt(r2, EDGES[f], y2)}"/>`;
    }
  }
  return out;
}

const WINDOWS = [
  { cls: 'active', shape: 'user', item: 'User_rev_surf_out2', status: 'Preselected: Unnamed.User_rev_surf_out2. (0.940041 mm, 7.546756 mm, 13.284951 mm)' },
  { cls: 'inactive wide', shape: 'test', item: 'Test_rev_surf_out2', status: '' },
];

for (const w of WINDOWS) {
  const node = document.getElementById('windowTpl').content.cloneNode(true);
  node.querySelector('.window').className += ' ' + w.cls;
  node.querySelector('[data-slot=item]').textContent = w.item;
  node.querySelector('[data-slot=status]').textContent = w.status;
  node.querySelector('.knob').innerHTML = knob(w.shape);
  document.getElementById('desktop').append(node);
}
```
